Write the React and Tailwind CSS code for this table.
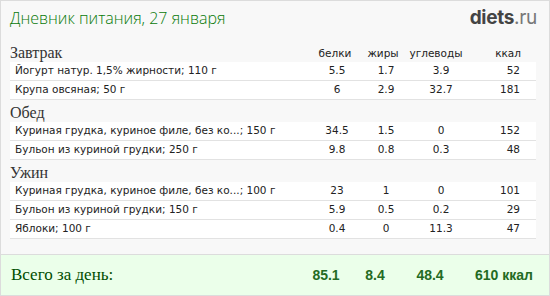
import React from 'react';

const meals = [
    {
        title: 'Завтрак',
        items: [
            ['Йогурт натур. 1,5% жирности; 110 г', '5.5', '1.7', '3.9', '52'],
            ['Крупа овсяная; 50 г', '6', '2.9', '32.7', '181'],
        ],
    },
    {
        title: 'Обед',
        items: [
            ['Куриная грудка, куриное филе, без ко...; 150 г', '34.5', '1.5', '0', '152'],
            ['Бульон из куриной грудки; 250 г', '9.8', '0.8', '0.3', '48'],
        ],
    },
    {
        title: 'Ужин',
        items: [
            ['Куриная грудка, куриное филе, без ко...; 100 г', '23', '1', '0', '101'],
            ['Бульон из куриной грудки; 150 г', '5.9', '0.5', '0.2', '29'],
            ['Яблоки; 100 г', '0.4', '0', '11.3', '47'],
        ],
    },
];

function FoodRow({ item }) {
    return (
        <div className="flex h-[19px] items-center bg-white border-b border-[#e2e2e2] text-[10.5px] text-[#222] font-['DejaVu_Sans',sans-serif]">
            <div className="flex-1 pl-[5px] whitespace-nowrap overflow-hidden">{item[0]}</div>
            <div className="w-[50px] text-center">{item[1]}</div>
            <div className="w-[48px] text-center">{item[2]}</div>
            <div className="w-[62px] text-center">{item[3]}</div>
            <div className="w-[64px] text-right pr-[16px]">{item[4]}</div>
        </div>
    );
}

export default function App() {
    return (
        <div className="w-[550px] h-[296px] bg-[#f8f8f8] border border-[#dcdcdc] flex flex-col overflow-hidden">
            {/* Header */}
            <div className="flex items-start justify-between h-[39px] pl-[9px] pr-[12px] pt-[5px]">
                <h1 className="text-[16px] text-[#087a08] font-['Open_Sans',sans-serif] font-light leading-[24px]">
                    Дневник питания, 27 января
                </h1>
                <div className="text-[19px] leading-[24px] font-['Inter',sans-serif] tracking-[-0.3px]">
                    <span className="font-bold text-[#444]">diets</span>
                    <span className="text-[#777]">.ru</span>
                </div>
            </div>

            <div className="pl-[9px] pr-[13px]">
                {meals.map((meal, i) => (
                    <div key={meal.title}>
                        <div className="flex items-end h-[22px]">
                            <div className="flex-1 text-[16px] leading-[19px] text-[#333] font-['Liberation_Serif',serif]">
                                {meal.title}
                            </div>
                            {i === 0 && (
                                <div className="flex text-[10.5px] text-[#222] font-['DejaVu_Sans',sans-serif]">
                                    <div className="w-[46px] text-center">белки</div>
                                    <div className="w-[50px] text-center">жиры</div>
                                    <div className="w-[56px] text-center">углеводы</div>
                                    <div className="w-[72px] text-right pr-[15px]">ккал</div>
                                </div>
                            )}
                        </div>
                        {meal.items.map((item) => (
                            <FoodRow key={item[0]} item={item} />
                        ))}
                    </div>
                ))}
            </div>

            {/* Total */}
            <div className="mt-auto h-[41px] border-t border-[#dcdcdc] bg-[#ebffea] flex items-center pl-[10px] pr-[16px]">
                <div className="flex-1 text-[17px] text-[#004d00] font-['Liberation_Serif',serif]">Всего за день:</div>
                <div className="flex text-[14px] font-bold text-[#236b23] font-['Liberation_Sans',sans-serif]">
                    <div className="w-[50px] text-center">85.1</div>
                    <div className="w-[48px] text-center">8.4</div>
                    <div className="w-[62px] text-center">48.4</div>
                    <div className="w-[72px] text-right">610 ккал</div>
                </div>
            </div>
        </div>
    );
}
